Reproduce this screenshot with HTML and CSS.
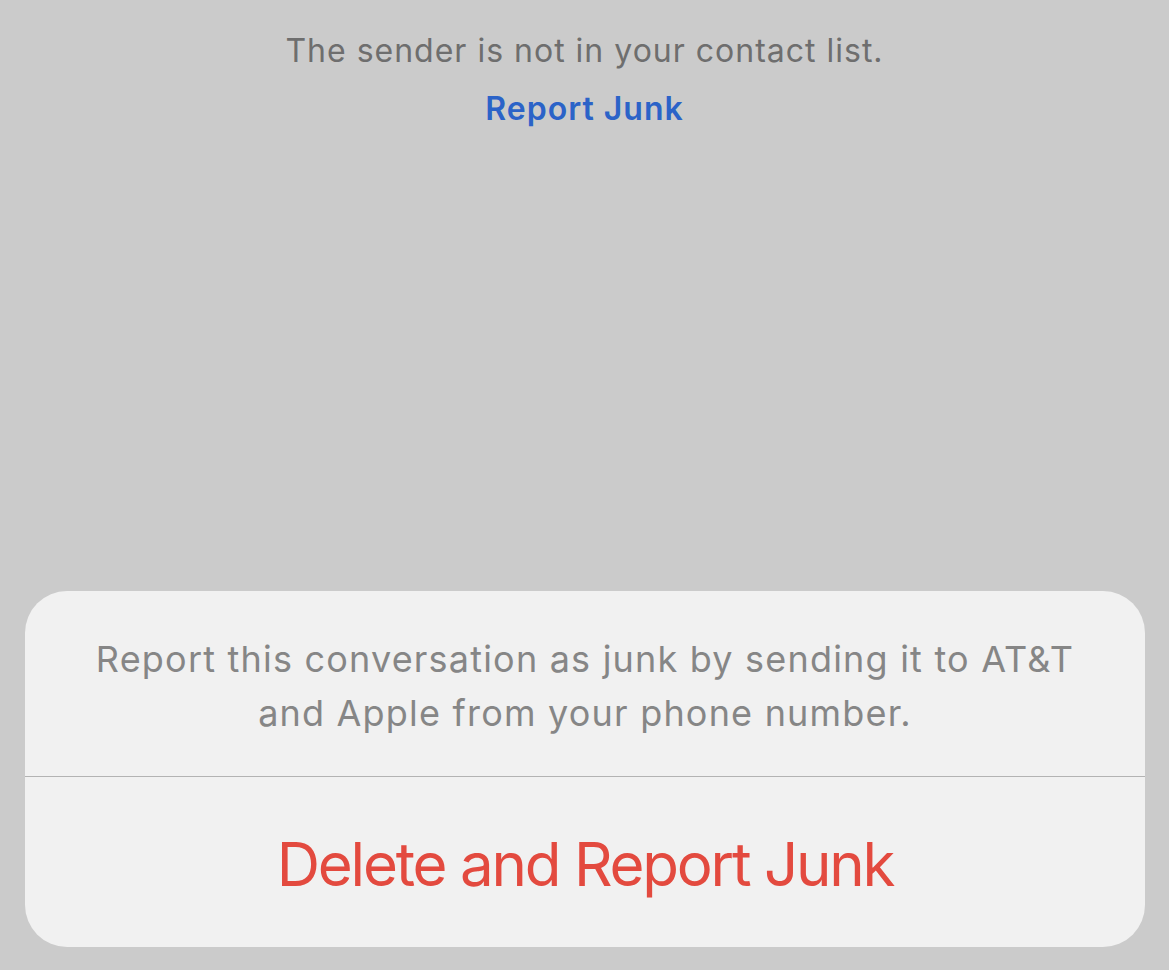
FILE: index.html
```html
<!DOCTYPE html>
<html>
<head>
<meta charset="utf-8">
<link rel="stylesheet" href="styles.css">
</head>
<body>
<div class="screen">
  <div class="notice">
    <p class="notice-text">The sender is not in your contact list.</p>
    <a class="notice-link">Report Junk</a>
  </div>
  <div class="sheet">
    <div class="sheet-message">
      <p>Report this conversation as junk by sending it to AT&amp;T<br>and Apple from your phone number.</p>
    </div>
    <div class="sheet-action">Delete and Report Junk</div>
  </div>
</div>
</body>
</html>
```

FILE: styles.css
```css
html, body {
  margin: 0;
  padding: 0;
  background: #cbcbcb;
}
.screen {
  width: 1169px;
  height: 970px;
  display: flex;
  flex-direction: column;
  font-family: Inter, "Noto Sans", sans-serif;
  box-sizing: border-box;
}
.notice {
  display: flex;
  flex-direction: column;
  align-items: center;
  padding-top: 31px;
  flex: 1;
}
.notice-text {
  margin: 0;
  font-size: 32px;
  line-height: 40px;
  color: #6e6e6e;
  letter-spacing: 1px;
}
.notice-link {
  margin-top: 18px;
  font-size: 32px;
  line-height: 40px;
  font-weight: 600;
  letter-spacing: 1px;
  color: #2b63c8;
}
.sheet {
  margin: 0 24px 23px 25px;
  background: #f1f1f1;
  border-radius: 42px;
  overflow: hidden;
}
.sheet-message {
  height: 185px;
  border-bottom: 1px solid #b3b3b3;
  display: flex;
  align-items: center;
  justify-content: center;
  box-sizing: content-box;
}
.sheet-message p {
  margin: 0;
  text-align: center;
  font-size: 36px;
  line-height: 54px;
  letter-spacing: 1.2px;
  color: #868686;
  padding-top: 4px;
}
.sheet-action {
  height: 170px;
  display: flex;
  align-items: center;
  justify-content: center;
  font-size: 60px;
  letter-spacing: -2.2px;
  color: #e34a3f;
  padding-top: 4px;
  box-sizing: border-box;
}
```
